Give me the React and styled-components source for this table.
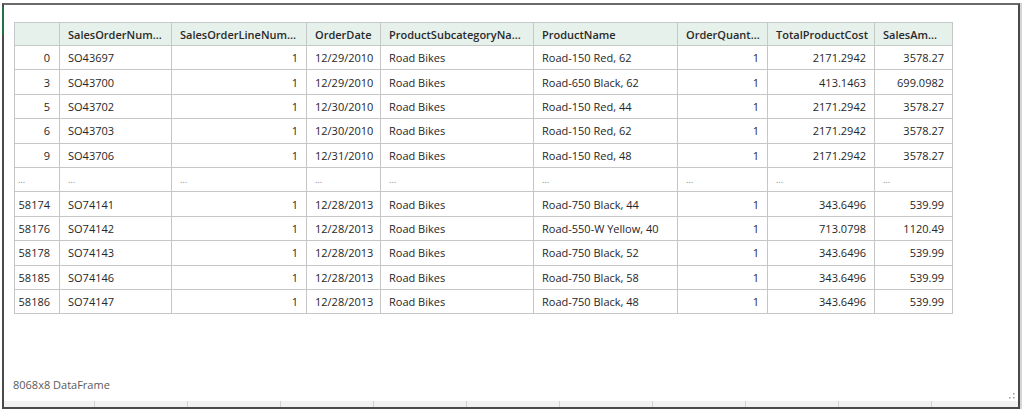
import React from "react";
import styled, { createGlobalStyle } from "styled-components";

const columns = [
  { key: "idx", label: "", width: 45, align: "right" },
  { key: "son", label: "SalesOrderNum...", width: 112, align: "left" },
  { key: "soln", label: "SalesOrderLineNum...", width: 135, align: "right" },
  { key: "date", label: "OrderDate", width: 74, align: "left" },
  { key: "sub", label: "ProductSubcategoryNa...", width: 153, align: "left" },
  { key: "name", label: "ProductName", width: 144, align: "left" },
  { key: "qty", label: "OrderQuant...", width: 90, align: "right" },
  { key: "cost", label: "TotalProductCost", width: 107, align: "right" },
  { key: "amt", label: "SalesAm...", width: 78, align: "right" },
];

const rows = [
  ["0", "SO43697", "1", "12/29/2010", "Road Bikes", "Road-150 Red, 62", "1", "2171.2942", "3578.27"],
  ["3", "SO43700", "1", "12/29/2010", "Road Bikes", "Road-650 Black, 62", "1", "413.1463", "699.0982"],
  ["5", "SO43702", "1", "12/30/2010", "Road Bikes", "Road-150 Red, 44", "1", "2171.2942", "3578.27"],
  ["6", "SO43703", "1", "12/30/2010", "Road Bikes", "Road-150 Red, 62", "1", "2171.2942", "3578.27"],
  ["9", "SO43706", "1", "12/31/2010", "Road Bikes", "Road-150 Red, 48", "1", "2171.2942", "3578.27"],
  null,
  ["58174", "SO74141", "1", "12/28/2013", "Road Bikes", "Road-750 Black, 44", "1", "343.6496", "539.99"],
  ["58176", "SO74142", "1", "12/28/2013", "Road Bikes", "Road-550-W Yellow, 40", "1", "713.0798", "1120.49"],
  ["58178", "SO74143", "1", "12/28/2013", "Road Bikes", "Road-750 Black, 52", "1", "343.6496", "539.99"],
  ["58185", "SO74146", "1", "12/28/2013", "Road Bikes", "Road-750 Black, 58", "1", "343.6496", "539.99"],
  ["58186", "SO74147", "1", "12/28/2013", "Road Bikes", "Road-750 Black, 48", "1", "343.6496", "539.99"],
];

const GlobalStyle = createGlobalStyle`
  html, body {
    margin: 0;
    padding: 0;
    background: #ffffff;
  }
  body {
    font-family: "Open Sans", "Noto Sans", sans-serif;
  }
`;

const Page = styled.div`
  width: 1024px;
  height: 412px;
  padding: 3px 0 0 2px;
  box-sizing: border-box;
`;

const Frame = styled.div`
  position: relative;
  width: 1018px;
  height: 406px;
  box-sizing: border-box;
  border: 2px solid #4a4a4a;
  border-top-color: #6a6a6a;
  box-shadow: 2px 0 0 #d6d6d6;
  background: #fff;
  display: flex;
  flex-direction: column;

  &::before {
    content: "";
    position: absolute;
    left: -2px;
    top: 2px;
    width: 2px;
    height: 28px;
    background: #217346;
  }
`;

const Body = styled.div`
  flex: 1;
  padding: 17px 0 0 10px;
`;

const Table = styled.table`
  width: 938px;
  border-collapse: collapse;
  table-layout: fixed;
  font-size: 11px;
  color: #262626;
`;

const HeadCell = styled.th`
  height: 23px;
  padding: 0 8px;
  background: #e7f1eb;
  border: 1px solid #c4c8c6;
  text-align: left;
  font-weight: 600;
  color: #2a2a2a;
  white-space: nowrap;
  overflow: hidden;
  box-sizing: border-box;
`;

const Cell = styled.td`
  height: 24.4px;
  padding: 0 ${(p) => (p.$tight ? 9 : 8)}px 0 ${(p) => (p.$tight ? 3 : 8)}px;
  border: 1px solid #c6c6c6;
  text-align: ${(p) => p.$align};
  white-space: nowrap;
  overflow: hidden;
  box-sizing: border-box;
`;

const Dots = styled(Cell)`
  text-align: left;
  color: #888;
  font-size: 9px;
`;

const Caption = styled.div`
  padding: 0 0 9px 9px;
  font-size: 11px;
  color: #5a5a5a;
`;

const GridStrip = styled.div`
  height: 6px;
  background-color: #f2f2f2;
  background-image: repeating-linear-gradient(
    to right,
    transparent 0,
    transparent 92px,
    #d2d2d2 92px,
    #d2d2d2 93px
  );
  background-position: -2px 0;
`;

const Grip = styled.svg`
  position: absolute;
  right: 3px;
  bottom: 8px;
  width: 6px;
  height: 6px;
`;

export default function App() {
  return (
    <Page>
      <GlobalStyle />
      <Frame>
        <Body>
          <Table>
            <colgroup>
              {columns.map((c) => (
                <col key={c.key} style={{ width: c.width }} />
              ))}
            </colgroup>
            <thead>
              <tr>
                {columns.map((c) => (
                  <HeadCell key={c.key}>{c.label}</HeadCell>
                ))}
              </tr>
            </thead>
            <tbody>
              {rows.map((r, i) =>
                r ? (
                  <tr key={i}>
                    {r.map((v, j) => (
                      <Cell
                        key={j}
                        $align={columns[j].align}
                        $tight={j === 0}
                      >
                        {v}
                      </Cell>
                    ))}
                  </tr>
                ) : (
                  <tr key={i}>
                    {columns.map((c, j) => (
                      <Dots key={c.key} $align="left" $tight={j === 0}>
                        ...
                      </Dots>
                    ))}
                  </tr>
                )
              )}
            </tbody>
          </Table>
        </Body>
        <Caption>8068x8 DataFrame</Caption>
        <GridStrip />
        <Grip viewBox="0 0 6 6">
          <rect x="4" y="0" width="1.5" height="1.5" fill="#9a9a9a" />
          <rect x="0" y="4" width="1.5" height="1.5" fill="#9a9a9a" />
          <rect x="4" y="4" width="1.5" height="1.5" fill="#9a9a9a" />
        </Grip>
      </Frame>
    </Page>
  );
}
